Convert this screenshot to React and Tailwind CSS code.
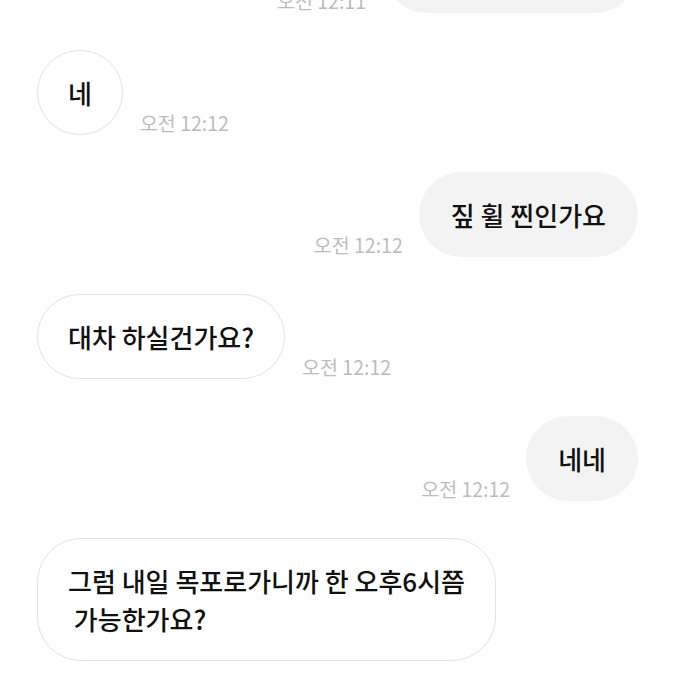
// 채팅 대화 화면
const FONT = "font-['Noto_Sans_CJK_KR','Noto_Sans',sans-serif]";

const Time = ({ children }) => (
    <span className="mb-[3px] shrink-0 text-[19.5px] leading-none text-[#bcbcbc]">{children}</span>
);

const Incoming = ({ children, time }) => (
    <div className="flex items-end gap-[17px] pl-[37px]">
        <div className="rounded-[44px] border border-[#e2e2e2] bg-white px-[30px] py-[22.5px] text-[26px] font-medium leading-[38px] text-[#111]">
            {children}
        </div>
        <Time>{time}</Time>
    </div>
);

const Outgoing = ({ children, time }) => (
    <div className="flex items-end justify-end gap-[16px] pr-[37px]">
        <Time>{time}</Time>
        <div className="min-w-[85px] rounded-[44px] bg-[#f3f3f3] px-[32px] py-[23.5px] text-[26px] font-medium leading-[38px] text-[#111]">
            {children}
        </div>
    </div>
);

export default function App() {
    return (
        <div className={`h-[675px] w-[675px] overflow-hidden bg-white ${FONT}`}>
            <div className="flex flex-col gap-[37px]">
                <div className="-mt-[72px] flex items-end justify-end gap-[18px] pr-[37px]">
                    <Time>오전 12:11</Time>
                    <div className="h-[85px] w-[254px] rounded-[44px] bg-[#f3f3f3]"></div>
                </div>
                <Incoming time="오전 12:12">네</Incoming>
                <Outgoing time="오전 12:12">짚 휠 찐인가요</Outgoing>
                <Incoming time="오전 12:12">대차 하실건가요?</Incoming>
                <Outgoing time="오전 12:12">네네</Outgoing>
                <Incoming>
                    그럼 내일 목포로가니까 한 오후6시쯤
                    <br />
                    {'\u00a0'}가능한가요?
                </Incoming>
            </div>
        </div>
    );
}
